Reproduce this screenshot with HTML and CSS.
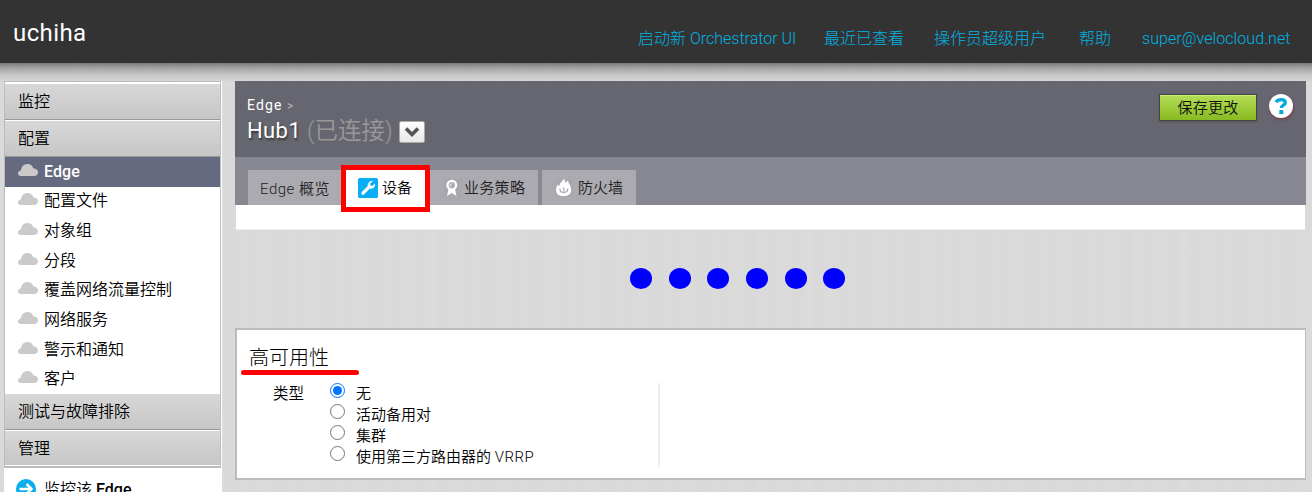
FILE: index.html
```html
<!DOCTYPE html>
<html lang="zh-CN">
<head>
<meta charset="utf-8">
<title>uchiha</title>
<link rel="stylesheet" href="styles.css">
</head>
<body>
<svg class="defs" width="0" height="0">
  <symbol id="cloud" viewBox="0 0 20 12"><path d="M3 12C.8 12 0 10.800 0 9.500 0 7.800 1.300 6.600 3 6.200 3.300 3 5.500 0 9.500 0c3.300 0 5 2 5.800 4.200C18.200 4.400 20 6 20 8.300 20 10.500 18.500 12 16 12z"/></symbol>
</svg>
<header class="topbar">
  <div class="brand">uchiha</div>
  <nav class="topnav">
    <a class="n1">启动新 Orchestrator UI</a>
    <a class="n2">最近已查看</a>
    <a class="n3">操作员超级用户</a>
    <a class="n4">帮助</a>
    <a class="n5">super@velocloud.net</a>
  </nav>
</header>
<div class="page">
  <aside class="side">
    <div class="menu">
      <div class="group first">监控</div>
      <div class="group second">配置</div>
      <ul class="items">
        <li class="active"><svg class="cloud"><use href="#cloud"/></svg><span>Edge</span></li>
        <li><svg class="cloud"><use href="#cloud"/></svg><span>配置文件</span></li>
        <li><svg class="cloud"><use href="#cloud"/></svg><span>对象组</span></li>
        <li><svg class="cloud"><use href="#cloud"/></svg><span>分段</span></li>
        <li><svg class="cloud"><use href="#cloud"/></svg><span>覆盖网络流量控制</span></li>
        <li><svg class="cloud"><use href="#cloud"/></svg><span>网络服务</span></li>
        <li><svg class="cloud"><use href="#cloud"/></svg><span>警示和通知</span></li>
        <li><svg class="cloud"><use href="#cloud"/></svg><span>客户</span></li>
      </ul>
      <div class="group third">测试与故障排除</div>
      <div class="group fourth">管理</div>
    </div>
    <div class="shortcut">
      <svg class="arrow" viewBox="0 0 20 20"><circle cx="10" cy="10" r="10" fill="#09aeef"/><path d="M3.500 10H15M10.500 5l5 5-5 5" fill="none" stroke="#fff" stroke-width="2.500"/></svg>
      <span>监控该 <b>Edge</b></span>
    </div>
  </aside>
  <main class="main">
    <section class="head">
      <div class="titles">
        <div class="crumb">Edge <span>&gt;</span></div>
        <div class="title">
          <span class="hub">Hub1</span><span class="state">(已连接)</span>
          <button class="drop"><svg viewBox="0 0 16 12"><path d="M2 2.500l6 6 6-6" fill="none" stroke="#555" stroke-width="3.600"/></svg></button>
        </div>
      </div>
      <button class="save">保存更改</button>
      <div class="help"><svg viewBox="0 0 12 16"><path d="M1 4.300C2 2.200 4 1.700 6 1.700c2.600 0 4.300 1 4.300 3C10.300 7.300 6.300 7 6.300 10" fill="none" stroke="#00a9dc" stroke-width="3.300"/><path d="M4.300 12h4v4h-4z" fill="#00a9dc"/></svg></div>
    </section>
    <nav class="tabs">
      <a class="tab t1">Edge 概览</a>
      <a class="tab t2"><svg viewBox="0 0 20 20"><rect width="20" height="20" rx="1.500" fill="#09aef5"/><path d="M5 15.200l6.500-6.500" stroke="#fff" stroke-width="3.200" stroke-linecap="round"/><path d="M15 3.200a4.200 4.200 0 0 0-5 5.500 3.500 3.500 0 0 0 2 1.900 4.200 4.200 0 0 0 5-5l-2.600 2.500-1.900-.6-.4-2z" fill="#fff"/></svg><span>设备</span></a>
      <a class="tab t3"><svg viewBox="0 0 20 20"><rect x="1" y="1" width="18" height="18" fill="#9fa9ad" opacity=".45"/><path d="M6.500 11L5 18l4.700-3L14.500 18 13 11z" fill="#fff"/><circle cx="9.800" cy="7.200" r="4.300" fill="#aaaab0" stroke="#fff" stroke-width="2.300"/><path d="M8 8.500Q8 6 10 5.500" fill="none" stroke="#e8e8eb" stroke-width="1.200"/></svg><span>业务策略</span></a>
      <a class="tab t4"><svg viewBox="0 0 20 20"><rect x="1" y="1" width="18" height="18" fill="#9fa9ad" opacity=".45"/><path d="M10 .8c.8 1.400 1.200 2.600 1.300 4L14.200 2.500c-.6 2.200 3.300 5.300 3 10C17 16.500 14 18 9.700 18 5 18 2.200 16.500 2.200 12.500c0-2.500.3-4 1.300-5.800l1.800 1.500C5.800 4.500 8.500 3.500 10 .8z" fill="#fff"/><path d="M5.800 10.500c.1 2.500 1.500 4 4 4s3.900-1.500 4-4M9.800 9.500v4" fill="none" stroke="#aaaeb3" stroke-width="1.300"/></svg><span>防火墙</span></a>
    </nav>
    <div class="strip"></div>
    <div class="dots"><i></i><i></i><i></i><i></i><i></i><i></i></div>
    <section class="panel">
      <h2>高可用性</h2>
      <div class="mark"></div>
      <div class="form">
        <div class="label">类型</div>
        <div class="options">
          <label><input type="radio" name="type" checked><span>无</span></label>
          <label><input type="radio" name="type"><span>活动备用对</span></label>
          <label><input type="radio" name="type"><span>集群</span></label>
          <label><input type="radio" name="type"><span>使用第三方路由器的 <em>VRRP</em></span></label>
        </div>
        <div class="divider"></div>
      </div>
    </section>
  </main>
</div>
</body>
</html>
```
FILE: styles.css
```css
* { box-sizing: border-box; }
body {
  margin: 0;
  width: 1312px;
  height: 492px;
  overflow: hidden;
  font: 350 16px/24px Roboto, "Noto Sans CJK SC", sans-serif;
  color: #000;
  background: repeating-linear-gradient(90deg, #d9d9d9 0, #dbdbdb 9px, #d9d9d9 17px, #dbdbdb 31px, #d9d9d9 47px);
}
.defs { display: block; }
.topbar {
  height: 63px;
  background: #333;
  display: flex;
  justify-content: space-between;
  padding: 0 22px 0 13px;
}
.brand { font-size: 24px; font-weight: 400; line-height: 66px; color: #fff; letter-spacing: .4px; }
.topnav { display: flex; color: #00b4e4; line-height: 78px; white-space: nowrap; font-weight: 300; }
.topnav a { flex: none; }
.n1 { width: 186px; }
.n2 { width: 110px; }
.n3 { width: 145px; }
.n4 { width: 63px; }
.n5 { width: 148px; letter-spacing: .08px; }
.page {
  display: flex;
  height: 429px;
  padding: 18px 6px 0 4px;
  background: linear-gradient(rgba(0,0,0,.44) 0, rgba(0,0,0,.25) 5px, rgba(0,0,0,.09) 12px, rgba(0,0,0,0) 20px);
}
.side { width: 218px; margin-right: 13px; background: #fff; }
.menu { width: 217px; border: 1px solid #bbb; border-width: 1px 1px 2px; background: #fff; }
.group {
  height: 36px;
  padding-left: 13px;
  line-height: 36px;
  background: linear-gradient(#d8d8d8, #c6c6c6);
}
.first { margin-top: 2px; border-bottom: 1px solid #999; }
.second { height: 37px; border-top: 1px solid #fff; border-bottom: 1px solid #999; line-height: 35px; }
.third { border-bottom: 1px solid #999; }
.fourth { border-top: 1px solid #fff; border-bottom: 1px solid #fff; line-height: 35px; }
.items { list-style: none; margin: 0; padding: 0; height: 237px; display: grid; grid-template-rows: repeat(8, 1fr); }
.items li { display: flex; align-items: center; padding-left: 13px; }
.items .active { background: #656a80; color: #fff; font-weight: 500; letter-spacing: .1px; }
.cloud { width: 20px; height: 12px; margin: -4px 6px 0 0; fill: #cacaca; }
.shortcut { display: flex; padding: 10px 0 0 12px; white-space: nowrap; }
.shortcut b { font-weight: 500; }
.arrow { width: 20px; height: 20px; margin: 1px 8px 0 0; flex: none; }
.main { width: 1071px; }
.head {
  height: 76px;
  background: #666670;
  display: flex;
  align-items: flex-start;
  padding: 12px 13px 0 12px;
}
.titles { flex: 1; }
.crumb { height: 24px; font-size: 14px; font-weight: 400; color: #fff; letter-spacing: 1.100px; }
.crumb span { color: #bbb; font-size: 12px; }
.title { display: flex; height: 28px; line-height: 27px; white-space: nowrap; }
.hub { width: 60px; font-size: 22px; font-weight: 400; letter-spacing: .4px; color: #fff; text-shadow: 1px 2px 2px #333; }
.state { width: 92px; padding-top: 1px; font-size: 23.500px; font-weight: 350; color: #999; }
.drop {
  width: 26px; height: 22px; margin-top: 4px; padding: 0;
  border: 1px solid #aaa; border-radius: 2px;
  background: linear-gradient(#fff, #e8e8e8);
  display: flex; align-items: center; justify-content: center;
}
.drop svg { width: 16px; height: 12px; }
.save {
  width: 98px; height: 27px; margin: 1px 12px 0 0; padding: 2px 0 0;
  border: 1px solid #444; box-shadow: 0 1px 2px #555, inset 0 1px #c9f078;
  background: linear-gradient(#b5de59, #89ba20);
  font: 350 15px/23px Roboto, "Noto Sans CJK SC", sans-serif; letter-spacing: .3px; color: #111;
}
.help {
  width: 24px; height: 24px; margin-top: 1px; border-radius: 50%;
  background: #fff; box-shadow: 1px 2px 3px #774450;
  display: flex; align-items: center; justify-content: center;
}
.help svg { width: 12px; height: 16px; }
.tabs { height: 48px; padding: 13px 13px 0; background: #888892; display: flex; }
.tab {
  height: 35px; margin-right: 4px; background: #aaaab0; color: #222;
  display: flex; align-items: center; font-size: 15px; line-height: 35px; white-space: nowrap;
}
.tab span { padding-top: 1px; }
.tab svg { width: 20px; height: 20px; flex: none; }
.t1 { width: 93px; margin-right: 0; padding: 3px 0 0 12px; letter-spacing: .5px; }
.t2 {
  position: relative; z-index: 1;
  width: 89px; height: 47px; margin: -5px 0 0; padding: 0 0 2px 12px;
  border: 5px solid #f00; background: #fff; color: #000;
}
.t2 span { padding-left: 4px; }
.t3 { width: 108px; padding-left: 12px; }
.t3 span { padding-left: 2px; letter-spacing: .3px; }
.t4 { width: 94px; padding-left: 12px; }
.t4 span { padding-left: 4px; }
.strip { height: 25px; margin: 0 1px; background: #fff; border-bottom: 1px solid #eee; }
.dots { height: 98px; padding: 38px 0 0 395px; display: flex; gap: 16.700px; }
.dots i { width: 22px; height: 21px; border-radius: 50%; background: #00f; }
.panel { height: 152px; background: #fff; border: 2px solid #bbb; border-right-width: 1px; padding: 14px 0 0 4px; }
.panel h2 { height: 26px; margin: 0; padding-left: 8px; font-size: 20px; line-height: 28px; font-weight: 300; }
.mark { width: 118px; height: 5px; border-radius: 3px; background: #f00; }
.form { display: flex; padding: 8px 0 0 32px; }
.label { width: 57px; font-size: 15.500px; line-height: 22px; }
.options { width: 328px; font-size: 15px; }
.options label { display: flex; height: 21px; line-height: 23px; }
.options em { font-style: normal; font-weight: 300; letter-spacing: .5px; }
.options input { width: 15px; height: 15px; margin: 0 11px 0 0; }
.divider { width: 2px; height: 84px; background: #eee; }
```
